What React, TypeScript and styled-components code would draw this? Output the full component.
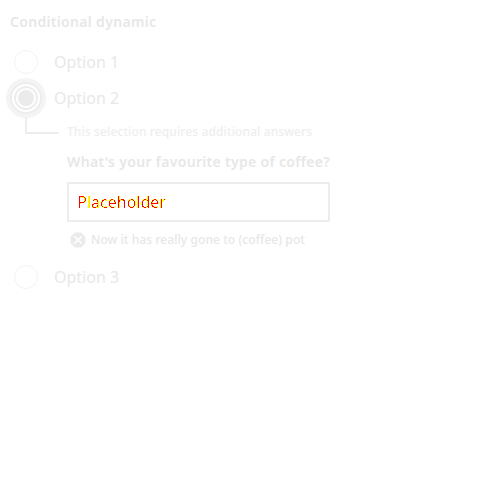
import React from "react";
import styled, { createGlobalStyle } from "styled-components";

const GlobalStyle = createGlobalStyle`
  * { box-sizing: border-box; }
  body { margin: 0; background: #fff; font-family: "Noto Sans", sans-serif; }
`;
const Form = styled.fieldset`
  border: 0;
  margin: 0;
  padding: 12px 10px;
  width: 340px;
  display: flex;
  flex-direction: column;
`;
const Legend = styled.div`
  height: 20px;
  line-height: 20px;
  font-size: 14px;
  font-weight: 600;
  letter-spacing: 0.32px;
  color: #e7e7e7;
`;
const Option = styled.label`
  display: flex;
  align-items: center;
  height: 24px;
  margin-top: 12px;
  padding-left: 4px;
  gap: 16px;
  line-height: 24px;
  font-size: 16px;
  color: #e8e8e8;
`;
const FirstOption = styled(Option)`
  margin-top: 18px;
`;
const Radio = styled.span<{ $checked?: boolean }>`
  display: flex;
  align-items: center;
  justify-content: center;
  width: 24px;
  height: 24px;
  border-radius: 50%;
  background: #fff;
  border: ${(p) => (p.$checked ? "2px solid #ededed" : "1px solid #f3f3f3")};
  box-shadow: ${(p) => (p.$checked ? "0 0 0 2px #fff, 0 0 0 4px #ededed, 0 0 0 8px #f4f4f4" : "none")};
`;
const Dot = styled.span`
  width: 16px;
  height: 16px;
  border-radius: 50%;
  background: #ebebeb;
`;
const Conditional = styled.div`
  display: flex;
  height: 143px;
`;
const Elbow = styled.div`
  width: 34px;
  height: 17px;
  margin: 7px 8px 0 15px;
  border-left: 2px solid #ededed;
  border-bottom: 2px solid #ededed;
  border-bottom-left-radius: 1px;
`;
const Field = styled.div`
  display: flex;
  flex-direction: column;
  width: 263px;
  padding-top: 14px;
`;
const Note = styled.div`
  line-height: 16px;
  font-size: 12px;
  font-weight: 500;
  letter-spacing: 0.12px;
  color: #eeeeee;
`;
const Question = styled.div`
  margin-top: 12px;
  line-height: 20px;
  font-size: 14px;
  font-weight: 600;
  letter-spacing: 0.31px;
  white-space: nowrap;
  color: #e7e7e7;
`;
const InputBox = styled.div`
  display: flex;
  align-items: center;
  height: 40px;
  margin-top: 10px;
  padding: 0 8px;
  border: 2px solid #ededed;
  border-radius: 1px;
`;
const Placeholder = styled.span`
  padding-left: 0.25px;
  font-size: 16px;
  line-height: 24px;
  color: #000;
  filter: url(#pixels);
`;
const ErrorRow = styled.div`
  display: flex;
  align-items: center;
  gap: 5px;
  margin-top: 10px;
  padding-left: 3px;
  height: 16px;
  line-height: 16px;
  font-size: 12px;
  font-weight: 500;
  letter-spacing: 0.08px;
  color: #e7e7e7;
`;

export default function App() {
  return (
    <>
      <GlobalStyle />
      <Form>
        <Legend>Conditional dynamic</Legend>
        <FirstOption><Radio />Option 1</FirstOption>
        <Option><Radio $checked><Dot /></Radio>Option 2</Option>
        <Conditional>
          <Elbow />
          <Field>
            <Note>This selection requires additional answers</Note>
            <Question>What's your favourite type of coffee?</Question>
            <InputBox><Placeholder>Placeholder</Placeholder></InputBox>
            <ErrorRow>
              <svg width="16" height="16" viewBox="0 0 16 16">
                <path d="M5 .5h6L15.500 5v6L11 15.500H5L.5 11V5z" fill="#ebebeb" />
                <path d="M4.300 4.300l7.400 7.400M11.700 4.300l-7.400 7.400" stroke="#fff" strokeWidth="1.600" />
              </svg>
              Now it has really gone to (coffee) pot
            </ErrorRow>
          </Field>
        </Conditional>
        <Option><Radio />Option 3</Option>
      </Form>
      <svg width="0" height="0" aria-hidden="true">
        <filter id="pixels" x="0" y="0" width="1" height="1" colorInterpolationFilters="sRGB">
          <feComponentTransfer in="SourceAlpha" result="edge">
            <feFuncR type="linear" slope="0" intercept="1" />
            <feFuncG type="linear" slope="0" intercept="1" />
            <feFuncA type="linear" slope="100" intercept="-37" />
          </feComponentTransfer>
          <feComponentTransfer in="SourceAlpha" result="core">
            <feFuncR type="linear" slope="0" intercept="1" />
            <feFuncA type="linear" slope="100" intercept="-74" />
          </feComponentTransfer>
          <feMerge><feMergeNode in="edge" /><feMergeNode in="core" /></feMerge>
        </filter>
      </svg>
    </>
  );
}
